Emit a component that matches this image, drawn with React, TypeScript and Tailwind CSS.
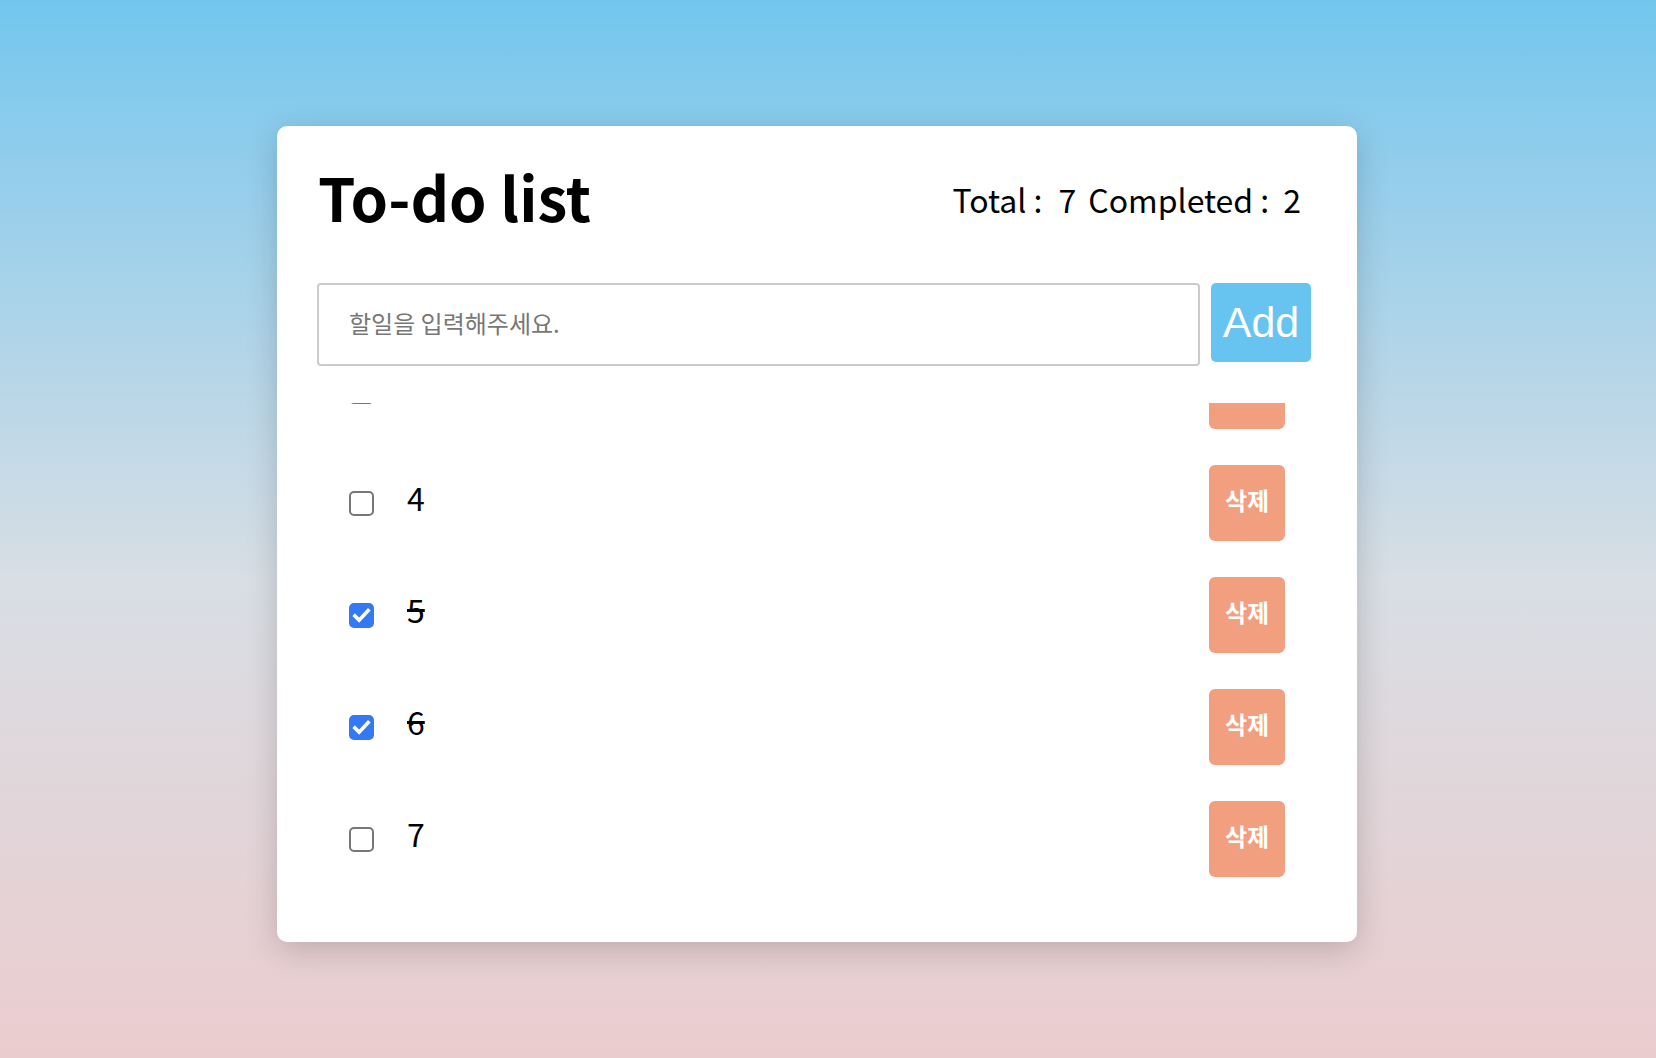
import { useLayoutEffect, useRef, useState } from "react";

type Todo = { id: number; text: string; done: boolean };

const initialTodos: Todo[] = [
  { id: 1, text: "1", done: false },
  { id: 2, text: "2", done: false },
  { id: 3, text: "3", done: false },
  { id: 4, text: "4", done: false },
  { id: 5, text: "5", done: true },
  { id: 6, text: "6", done: true },
  { id: 7, text: "7", done: false },
];

const font = { fontFamily: '"Noto Sans CJK KR", "Noto Sans", sans-serif' };

function TodoItem({
  todo,
  onToggle,
  onDelete,
}: {
  todo: Todo;
  onToggle: () => void;
  onDelete: () => void;
}) {
  return (
    <div className="flex h-[112px] items-center px-[32px]">
      <label className="relative flex h-[25px] w-[25px] shrink-0 cursor-pointer">
        <input
          type="checkbox"
          checked={todo.done}
          onChange={onToggle}
          className="h-[25px] w-[25px] cursor-pointer appearance-none rounded-[5px] border-2 border-[#777777] bg-white checked:border-[#3478f6] checked:bg-[#3478f6]"
        />
        {todo.done && (
          <svg
            viewBox="0 0 24 24"
            className="pointer-events-none absolute left-[2px] top-[2px] h-[21px] w-[21px]"
          >
            <path
              d="M4.5 12.5l4.8 4.8L19.5 6.5"
              fill="none"
              stroke="white"
              strokeWidth="4.2"
              strokeLinecap="square"
            />
          </svg>
        )}
      </label>
      <span
        className={`ml-[33px] flex-1 pb-[12px] text-[32px] leading-none text-black ${
          todo.done ? "line-through" : ""
        }`}
      >
        {todo.text}
      </span>
      <button
        onClick={onDelete}
        className="h-[76px] w-[76px] shrink-0 rounded-[6px] bg-[#f19f7e] pb-[6px] text-[24px] font-bold leading-none text-white"
      >
        삭제
      </button>
    </div>
  );
}

export default function App() {
  const [todos, setTodos] = useState<Todo[]>(initialTodos);
  const [input, setInput] = useState("");
  const listRef = useRef<HTMLDivElement>(null);

  // keep the list scrolled to the newest item
  useLayoutEffect(() => {
    if (listRef.current) listRef.current.scrollTop = listRef.current.scrollHeight;
  }, [todos.length]);

  const completed = todos.filter((t) => t.done).length;

  const addTodo = () => {
    if (!input.trim()) return;
    setTodos([...todos, { id: Date.now(), text: input, done: false }]);
    setInput("");
  };

  return (
    <div
      className="flex min-h-screen w-full justify-center bg-gradient-to-b from-[#72c6ee] via-[#d8dee4] via-55% to-[#ebccce] pr-[22px] pt-[126px]"
      style={font}
    >
      <div className="flex h-[816px] w-[1080px] flex-col rounded-[10px] bg-white px-[40px] pb-[47px] pt-[40px] shadow-[0_8px_32px_rgba(0,0,0,0.18)]">
        {/* header */}
        <div className="flex items-center justify-between">
          <h1 className="pl-[1px] text-[60px] font-bold leading-none text-black">To-do list</h1>
          <div className="mr-[16px] mt-[6px] flex whitespace-pre text-[32px] leading-none text-black">
            <span>Total :</span>
            <span className="ml-[16px]">{todos.length}</span>
            <span className="ml-[12px]">Completed :</span>
            <span className="ml-[14px]">{completed}</span>
          </div>
        </div>

        {/* form */}
        <div className="mt-[57px] flex items-start gap-[11px]">
          <input
            value={input}
            onChange={(e) => setInput(e.target.value)}
            onKeyDown={(e) => e.key === "Enter" && addTodo()}
            placeholder="할일을 입력해주세요."
            className="h-[83px] w-[883px] rounded-[4px] border-2 border-[#cbcbcb] bg-white pb-[4px] pl-[30px] text-[24px] text-black outline-none placeholder:text-[#777777]"
            style={font}
          />
          <button
            onClick={addTodo}
            className="h-[79px] w-[100px] rounded-[5px] bg-[#67c3ef] text-[43px] leading-none text-white"
            style={{ fontFamily: '"Liberation Sans", Arial, sans-serif' }}
          >
            Add
          </button>
        </div>

        {/* list */}
        <div
          ref={listRef}
          className="mt-[37px] h-[492px] w-[1000px] overflow-y-auto [scrollbar-width:none] [&::-webkit-scrollbar]:hidden"
        >
          {todos.map((todo) => (
            <TodoItem
              key={todo.id}
              todo={todo}
              onToggle={() =>
                setTodos(todos.map((t) => (t.id === todo.id ? { ...t, done: !t.done } : t)))
              }
              onDelete={() => setTodos(todos.filter((t) => t.id !== todo.id))}
            />
          ))}
        </div>
      </div>
    </div>
  );
}
